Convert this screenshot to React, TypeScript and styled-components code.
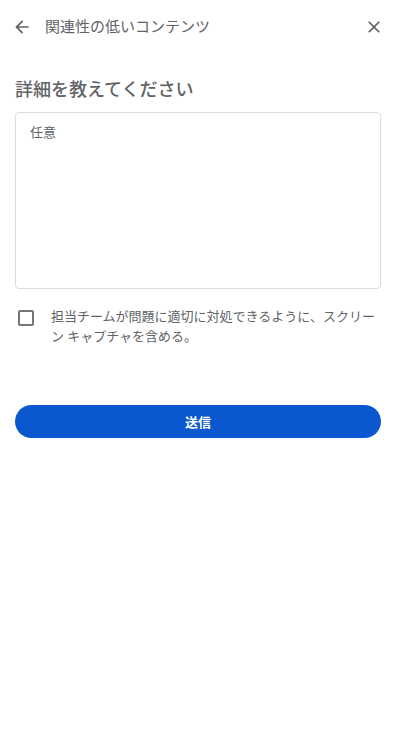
import styled, { createGlobalStyle } from "styled-components";

const GlobalStyle = createGlobalStyle`
  html, body {
    margin: 0;
    padding: 0;
    background: #fff;
    font-family: Roboto, "Noto Sans CJK JP", "Noto Sans", sans-serif;
  }
`;

const Page = styled.div`
  width: 396px;
  min-height: 752px;
  box-sizing: border-box;
  background: #fff;
`;

const Header = styled.div`
  height: 54px;
  display: flex;
  align-items: center;
  padding: 0 12px 0 12px;
`;

const IconButton = styled.button`
  width: 20px;
  height: 20px;
  padding: 0;
  border: none;
  background: none;
  display: flex;
  align-items: center;
  justify-content: center;
  color: #5f6368;
`;

const Title = styled.div`
  flex: 1;
  margin-left: 13px;
  font-size: 15px;
  color: #5f6368;
  line-height: 20px;
`;

const Body = styled.div`
  padding: 0 15px;
`;

const Heading = styled.h2`
  margin: 24px 0 10px;
  font-size: 18px;
  font-weight: 500;
  color: #5f6368;
  line-height: 24px;
`;

const TextArea = styled.textarea`
  display: block;
  width: 100%;
  height: 177px;
  box-sizing: border-box;
  border: 1px solid #dadce0;
  border-radius: 4px;
  padding: 11px 14px;
  font-family: inherit;
  font-size: 13px;
  line-height: 18px;
  color: #202124;
  resize: none;
  outline: none;
  &::placeholder {
    color: #5f6368;
  }
`;

const CheckRow = styled.label`
  display: flex;
  align-items: flex-start;
  margin-top: 18px;
  gap: 17px;
`;

const Box = styled.span`
  flex: none;
  width: 16px;
  height: 16px;
  box-sizing: border-box;
  border: 2px solid #757575;
  border-radius: 2px;
  margin: 3px 0 0 3px;
`;

const CheckText = styled.span`
  font-size: 13px;
  line-height: 20px;
  color: #5f6368;
`;

const Submit = styled.button`
  display: block;
  width: 100%;
  height: 33px;
  margin-top: 58px;
  border: none;
  border-radius: 17px;
  background: #0b57d0;
  color: #fff;
  font-family: inherit;
  font-size: 13px;
  font-weight: 700;
`;

export default function App() {
  return (
    <>
      <GlobalStyle />
      <Page>
        <Header>
          <IconButton aria-label="戻る">
            <svg width="20" height="20" viewBox="0 0 24 24" fill="currentColor">
              <path d="M20 11H7.83l5.59-5.59L12 4l-8 8 8 8 1.41-1.41L7.83 13H20v-2z" />
            </svg>
          </IconButton>
          <Title>関連性の低いコンテンツ</Title>
          <IconButton aria-label="閉じる">
            <svg width="22" height="22" viewBox="0 0 24 24" fill="currentColor">
              <path d="M19 6.41 17.59 5 12 10.59 6.41 5 5 6.41 10.59 12 5 17.59 6.41 19 12 13.41 17.59 19 19 17.59 13.41 12z" />
            </svg>
          </IconButton>
        </Header>
        <Body>
          <Heading>詳細を教えてください</Heading>
          <TextArea placeholder="任意" />
          <CheckRow>
            <Box />
            <CheckText>
              担当チームが問題に適切に対処できるように、スクリーン キャプチャを含める。
            </CheckText>
          </CheckRow>
          <Submit>送信</Submit>
        </Body>
      </Page>
    </>
  );
}
